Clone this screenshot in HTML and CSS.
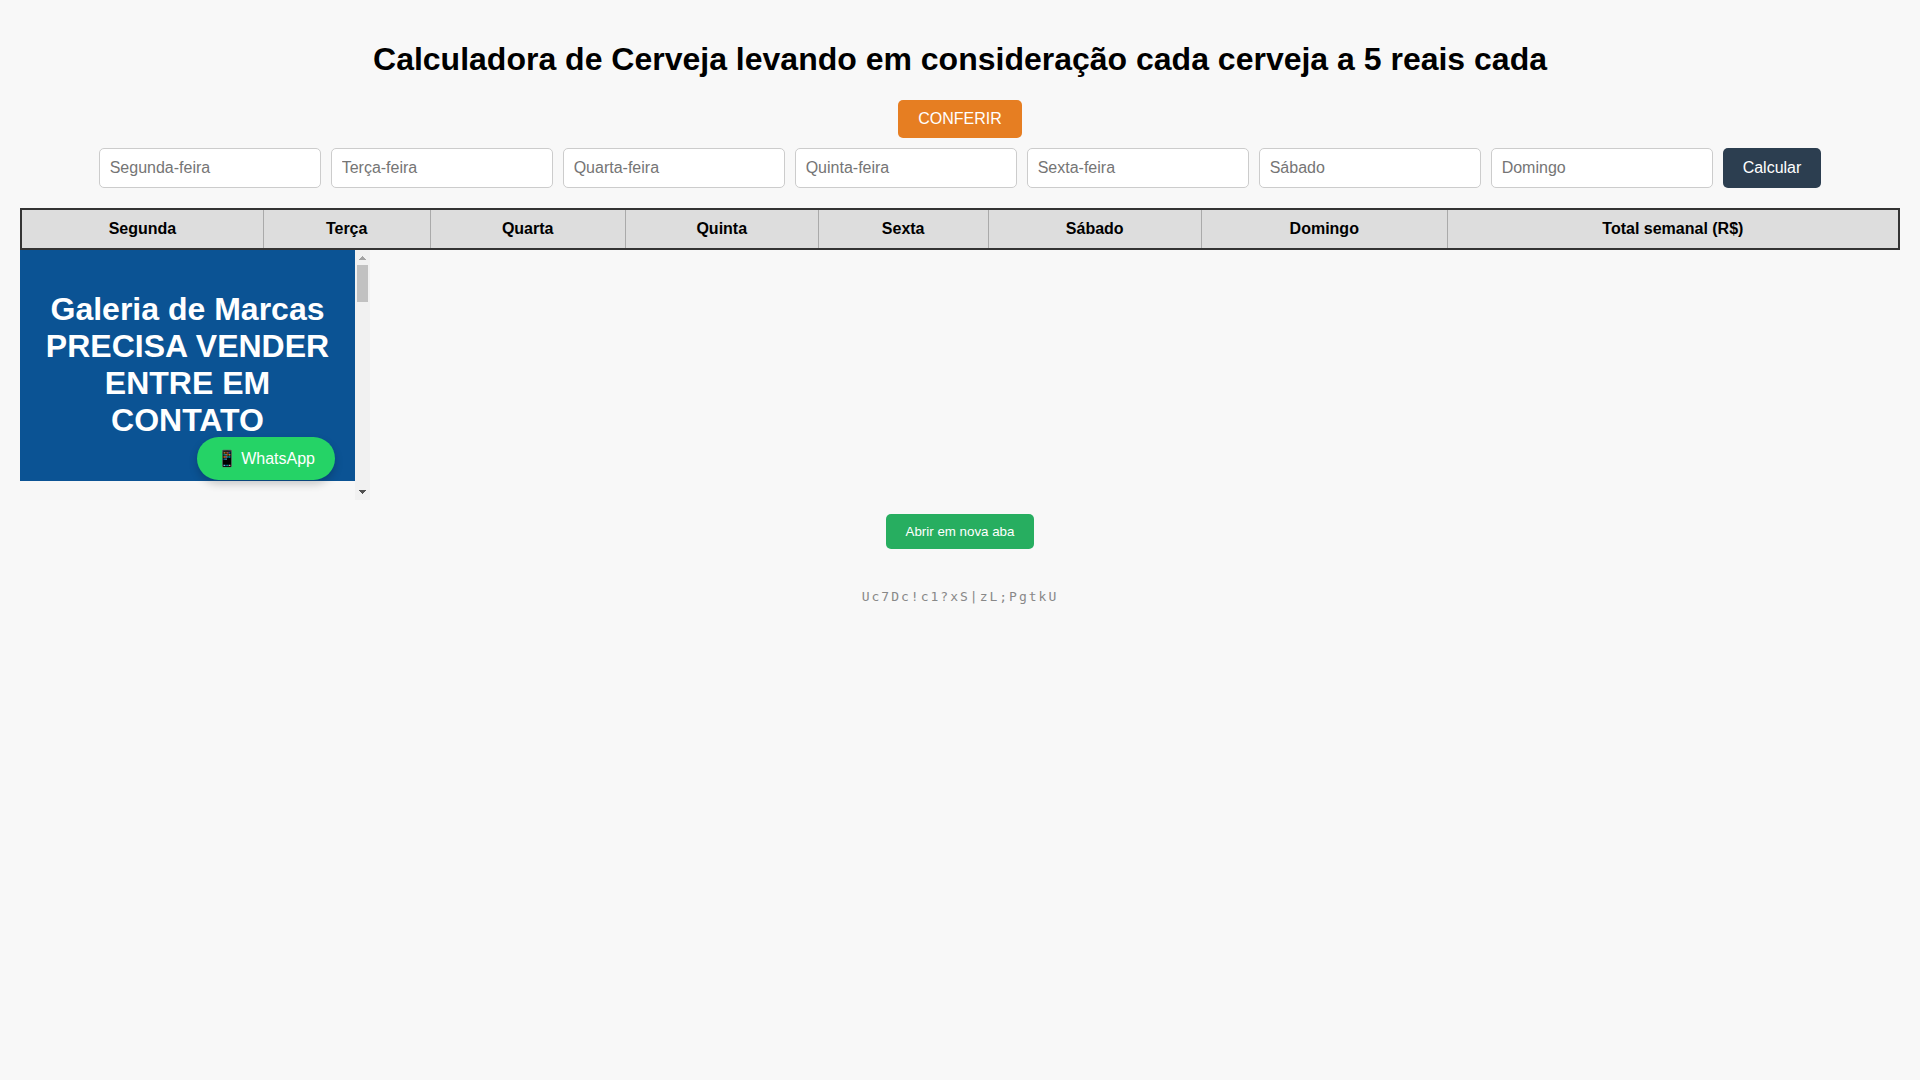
FILE: index.html
```
<!DOCTYPE html>
<html lang="pt-BR">
<head>
  <meta charset="UTF-8">
  <meta name="viewport" content="width=device-width, initial-scale=1">
  <title>Calculadora de Cerveja</title>
  <link rel="stylesheet" href="styles.css">
</head>
<body>
  <h1 class="title">Calculadora de Cerveja levando em consideração cada cerveja a 5 reais cada</h1>

  <form class="calculator">
    <button type="button" class="btn btn-check">CONFERIR</button>
    <div class="days">
      <input class="day" type="text" placeholder="Segunda-feira" aria-label="Segunda-feira">
      <input class="day" type="text" placeholder="Terça-feira" aria-label="Terça-feira">
      <input class="day" type="text" placeholder="Quarta-feira" aria-label="Quarta-feira">
      <input class="day" type="text" placeholder="Quinta-feira" aria-label="Quinta-feira">
      <input class="day" type="text" placeholder="Sexta-feira" aria-label="Sexta-feira">
      <input class="day" type="text" placeholder="Sábado" aria-label="Sábado">
      <input class="day" type="text" placeholder="Domingo" aria-label="Domingo">
      <button type="button" class="btn btn-calc">Calcular</button>
    </div>
  </form>

  <table class="results">
    <thead>
      <tr>
        <th scope="col">Segunda</th>
        <th scope="col">Terça</th>
        <th scope="col">Quarta</th>
        <th scope="col">Quinta</th>
        <th scope="col">Sexta</th>
        <th scope="col">Sábado</th>
        <th scope="col">Domingo</th>
        <th scope="col">Total semanal (R$)</th>
      </tr>
    </thead>
    <tbody></tbody>
  </table>

  <section class="gallery">
    <div class="gallery-view">
      <header class="gallery-header">
        <h2 class="gallery-title">Galeria de Marcas PRECISA VENDER ENTRE EM CONTATO</h2>
      </header>
      <a class="whatsapp" href="#whatsapp">📱 WhatsApp</a>
    </div>
    <div class="scrollbar" aria-hidden="true">
      <svg class="arrow" viewBox="0 0 15 15"><path d="M4 10V9h1V8h1V7h1V6h1v1h1v1h1v1h1v1z" fill="#a3a3a3"/></svg>
      <div class="track"><div class="thumb"></div></div>
      <svg class="arrow" viewBox="0 0 15 15"><path d="M4 5h7v1h-1v1H9v1H8v1H7V8H6V7H5V6H4z" fill="#505050"/></svg>
    </div>
  </section>

  <div class="actions">
    <button type="button" class="btn-open">Abrir em nova aba</button>
  </div>
  <footer class="code">Uc7Dc!c1?xS|zL;PgtkU</footer>
</body>
</html>
```
FILE: styles.css
```
* {
  box-sizing: border-box;
}

body {
  margin: 0;
  padding: 20px;
  background: #f8f8f8;
  color: #000;
  font-family: Arial, "Liberation Sans", sans-serif;
  font-size: 16px;
}

.title,
.gallery-title {
  margin: 21px 0 22px;
  font-size: 32px;
  line-height: 37px;
  text-align: center;
}

.calculator {
  display: flex;
  flex-direction: column;
  align-items: center;
  gap: 10px;
  margin-bottom: 20px;
}

.days {
  display: flex;
  flex-wrap: wrap;
  justify-content: center;
  gap: 10px;
}

.day {
  width: 222px;
  height: 40px;
  padding: 10px;
  border: 1px solid #ccc;
  border-radius: 5px;
  background: #fff;
  font-family: inherit;
  font-size: 16px;
}

.day::placeholder {
  color: #757575;
}

.btn {
  padding: 10px 20px;
  border: none;
  border-radius: 5px;
  color: #fff;
  font-family: inherit;
  font-size: 16px;
  line-height: 18px;
  cursor: pointer;
}

.btn-check {
  background: #e67e22;
}

.btn-calc {
  background: #2c3e50;
}

.results {
  width: 100%;
  border: 2px solid #333;
  border-collapse: collapse;
}

.results th {
  padding: 10px 8px;
  border: 1px solid #aaa;
  background: #ddd;
  text-align: center;
}

.results thead {
  border: 2px solid #333;
}

.gallery {
  display: flex;
  width: 350px;
  max-width: 100%;
  height: 250px;
}

.gallery-view {
  position: relative;
  flex: 1;
  background: #f7f7f7;
}

.gallery-header {
  display: flow-root;
  padding: 20px;
  background: #0b5394;
  color: #fff;
}

.whatsapp {
  position: absolute;
  right: 20px;
  bottom: 20px;
  padding: 12px 20px;
  border-radius: 30px;
  background: #25d366;
  box-shadow: 0 4px 8px rgba(0, 0, 0, 0.2);
  color: #fff;
  line-height: 19px;
  text-decoration: none;
}

.scrollbar {
  display: flex;
  flex-direction: column;
  width: 15px;
  background: #f1f1f1;
}

.arrow {
  width: 15px;
  height: 15px;
  shape-rendering: crispEdges;
}

.track {
  flex: 1;
  padding: 0 2px;
}

.thumb {
  height: 37px;
  background: #c1c1c1;
}

.actions {
  margin-top: 14px;
  text-align: center;
}

.btn-open {
  padding: 10px 20px;
  border: none;
  border-radius: 5px;
  background: #27ae60;
  color: #fff;
  font-family: inherit;
  line-height: 15px;
  cursor: pointer;
}

.code {
  margin-top: 40px;
  color: #888;
  font-family: "DejaVu Sans Mono", monospace;
  font-size: 13px;
  line-height: 15px;
  letter-spacing: 2px;
  text-align: center;
}
```
